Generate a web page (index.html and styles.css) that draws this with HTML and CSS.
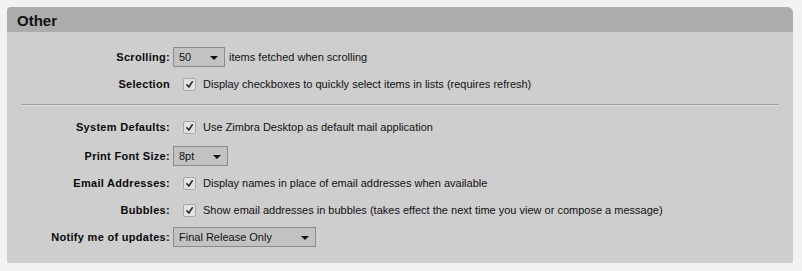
FILE: index.html
```html
<!DOCTYPE html>
<html>
<head>
<meta charset="utf-8">
<link rel="stylesheet" href="styles.css">
</head>
<body>
<div class="panel">
  <div class="panel-head">Other</div>
  <div class="panel-body">
    <div class="form group1">
      <div class="row">
        <div class="label">Scrolling:</div>
        <div class="field">
          <div class="select w50"><span>50</span><i class="arrow"></i></div>
          <span class="after">items fetched when scrolling</span>
        </div>
      </div>
      <div class="row">
        <div class="label">Selection</div>
        <div class="field">
          <span class="cb"><svg width="11" height="11" viewBox="0 0 11 11"><path d="M2.8 5.8 L4.8 8 L8.3 2.8" fill="none" stroke="#333" stroke-width="1.7" stroke-linecap="round" stroke-linejoin="round"/></svg></span>
          <span class="cbtext">Display checkboxes to quickly select items in lists (requires refresh)</span>
        </div>
      </div>
    </div>
    <div class="sep"></div>
    <div class="form group2">
      <div class="row">
        <div class="label">System Defaults:</div>
        <div class="field">
          <span class="cb"><svg width="11" height="11" viewBox="0 0 11 11"><path d="M2.8 5.8 L4.8 8 L8.3 2.8" fill="none" stroke="#333" stroke-width="1.7" stroke-linecap="round" stroke-linejoin="round"/></svg></span>
          <span class="cbtext">Use Zimbra Desktop as default mail application</span>
        </div>
      </div>
      <div class="row row-print">
        <div class="label">Print Font Size:</div>
        <div class="field">
          <div class="select w8pt"><span>8pt</span><i class="arrow"></i></div>
        </div>
      </div>
      <div class="row">
        <div class="label">Email Addresses:</div>
        <div class="field">
          <span class="cb"><svg width="11" height="11" viewBox="0 0 11 11"><path d="M2.8 5.8 L4.8 8 L8.3 2.8" fill="none" stroke="#333" stroke-width="1.7" stroke-linecap="round" stroke-linejoin="round"/></svg></span>
          <span class="cbtext">Display names in place of email addresses when available</span>
        </div>
      </div>
      <div class="row">
        <div class="label">Bubbles:</div>
        <div class="field">
          <span class="cb"><svg width="11" height="11" viewBox="0 0 11 11"><path d="M2.8 5.8 L4.8 8 L8.3 2.8" fill="none" stroke="#333" stroke-width="1.7" stroke-linecap="round" stroke-linejoin="round"/></svg></span>
          <span class="cbtext">Show email addresses in bubbles (takes effect the next time you view or compose a message)</span>
        </div>
      </div>
      <div class="row">
        <div class="label">Notify me of updates:</div>
        <div class="field">
          <div class="select wnotify"><span>Final Release Only</span><i class="arrow"></i></div>
        </div>
      </div>
    </div>
  </div>
</div>
</body>
</html>
```
FILE: styles.css
```css
html, body {
  margin: 0;
  padding: 0;
  background: #f2f2f2;
  font-family: "Liberation Sans", Arial, sans-serif;
  font-size: 11px;
  color: #111;
}

.panel {
  margin: 7px 9px 0 7px;
  width: 786px;
  height: 256px;
  background: #cecece;
  border-radius: 4px 6px 0 0;
  overflow: hidden;
}

.panel-head {
  height: 25px;
  line-height: 25px;
  background: #acacac;
  padding-left: 10px;
  font-weight: bold;
  font-size: 15px;
  color: #111;
  padding-top: 1px;
  box-sizing: border-box;
}

.panel-body {
  padding-top: 15px;
}

.form {
  display: flex;
  flex-direction: column;
  gap: 7px;
}

.group2 {
  margin-top: 11px;
}

.row {
  display: grid;
  grid-template-columns: 163px 1fr;
  column-gap: 3px;
  align-items: center;
  height: 20px;
}

.row-print {
  margin-top: 2px;
}

.label {
  text-align: right;
  font-weight: bold;
  white-space: nowrap;
  letter-spacing: 0.3px;
  color: #0a0a0a;
}

.field {
  display: flex;
  align-items: center;
  white-space: nowrap;
}

.select {
  box-sizing: border-box;
  height: 20px;
  border: 1px solid #8c8c8c;
  background: #c2c2c2;
  display: flex;
  align-items: center;
  justify-content: space-between;
  padding: 0 6px 0 5px;
}

.w50 { width: 52px; }
.w8pt { width: 55px; }
.wnotify { width: 143px; }

.arrow {
  width: 0;
  height: 0;
  border-left: 4px solid transparent;
  border-right: 4px solid transparent;
  border-top: 4px solid #111;
  margin-top: 1px;
}

.after {
  margin-left: 4px;
}

.cb {
  box-sizing: border-box;
  width: 13px;
  height: 13px;
  margin-left: 10px;
  border: 1px solid #a8a8a8;
  border-radius: 2px;
  background: #e2e2e2;
  display: flex;
  align-items: center;
  justify-content: center;
}

.cb svg {
  display: block;
}

.cbtext {
  margin-left: 7px;
}

.sep {
  margin: 10px 14px 0 14px;
  border-top: 1px solid #9a9a9a;
  border-bottom: 1px solid #e2e2e2;
  height: 0;
}
```
